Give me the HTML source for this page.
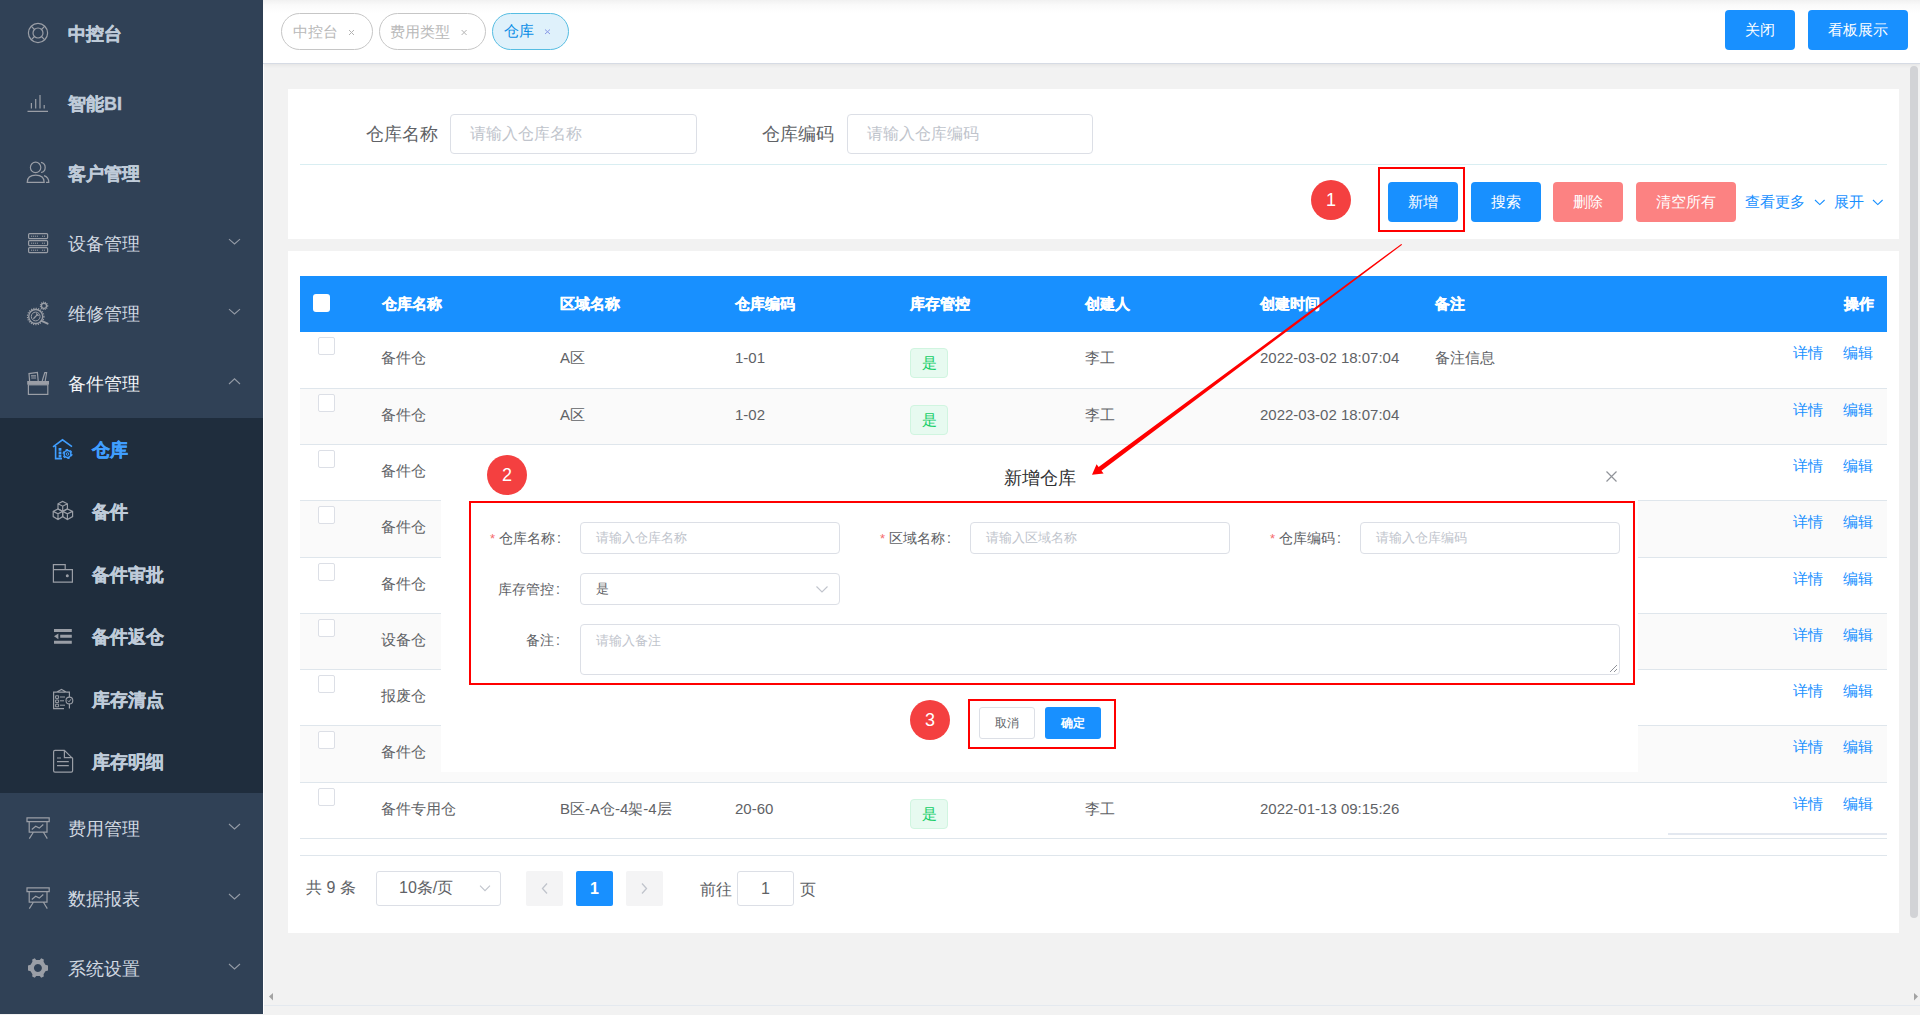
<!DOCTYPE html>
<html><head><meta charset="utf-8">
<style>
*{box-sizing:border-box;margin:0;padding:0}
html,body{width:1920px;height:1015px;overflow:hidden;background:#f2f2f2;font-family:"Liberation Sans",sans-serif;color:#606266;position:relative}
div,span{position:absolute;white-space:nowrap}
#side{left:0;top:0;width:263px;height:1014px;background:#304156}
#sub{left:0;top:418px;width:263px;height:375px;background:#1f2d3d}
.mt{left:68px;font-size:18px;color:#d2d9e2;line-height:20px}
.mb{font-weight:bold;color:#bfcbd9;-webkit-text-stroke:0.35px #bfcbd9}
.st{left:92px;font-size:18px;color:#bfcbd9;font-weight:bold;line-height:20px;-webkit-text-stroke:0.35px currentColor}
#hdr{left:263px;top:0;width:1657px;height:63px;background:linear-gradient(#f1f1f1,#fafafa 5px,#fff 13px);box-shadow:0 1px 0 #d6dbe4,0 2px 4px rgba(0,0,0,.07)}
.tag{top:13px;height:37px;border:1px solid #c6c6c6;border-radius:19px;font-size:15px;color:#b9b9b9;line-height:35px;background:#fff}
.tag span{top:0}
.btn{color:#fff;text-align:center;border-radius:4px;font-size:15px;background:#1890ff}
.card{background:#fff}
.lbl{font-size:18px;color:#606266;line-height:20px}
.inp{border:1px solid #dcdfe6;border-radius:4px;background:#fff;font-size:16px;color:#c0c4cc;line-height:20px}
.th{top:294px;color:#fff;font-size:15px;font-weight:bold;line-height:20px;-webkit-text-stroke:0.3px #fff}
.row{left:300px;width:1587px;border-bottom:1px solid #dfe6ec;background:#fff}
.row.s{background:#fafafa}
.c{font-size:15px;color:#606266;line-height:20px;top:16px}
.cb{left:18px;top:5px;width:17px;height:18px;border:1px solid #dcdfe6;border-radius:2px;background:#fff}
.yes{left:610px;top:16px;width:38px;height:30px;border:1px solid #d0f5e0;background:#e7faf0;color:#13ce66;border-radius:4px;font-size:15px;text-align:center;line-height:28px}
.lk{top:11px;font-size:15px;color:#1890ff;line-height:20px}
.rb{border:2px solid #ff0000}
.num{border-radius:50%;background:#f44040;color:#fff;font-size:18px;text-align:center}
.fl{font-size:14px;color:#606266;line-height:20px}
.fl b{color:#f56c6c;font-weight:normal;font-size:13px}
.fi{border:1px solid #dcdfe6;border-radius:4px;background:#fff;font-size:13px;color:#c0c4cc;line-height:20px}
</style></head><body>

<!-- SIDEBAR -->
<div id="side">
  <div id="sub"></div>
  <div class="mt mb" style="top:24px">中控台</div>
  <div class="mt mb" style="top:94px">智能BI</div>
  <div class="mt mb" style="top:164px">客户管理</div>
  <div class="mt" style="top:234px">设备管理</div>
  <div class="mt" style="top:304px">维修管理</div>
  <div class="mt" style="top:374px;color:#f4f6f9">备件管理</div>
  <div class="st" style="top:440px;color:#409eff">仓库</div>
  <div class="st" style="top:502px">备件</div>
  <div class="st" style="top:565px">备件审批</div>
  <div class="st" style="top:627px">备件返仓</div>
  <div class="st" style="top:690px">库存清点</div>
  <div class="st" style="top:752px">库存明细</div>
  <div class="mt" style="top:819px">费用管理</div>
  <div class="mt" style="top:889px">数据报表</div>
  <div class="mt" style="top:959px">系统设置</div>
  <svg style="position:absolute;left:0;top:0" width="263" height="1014" fill="none" stroke="#9a9ea6" stroke-width="1.2">
    <!-- 中控台 lifebuoy -->
    <circle cx="38" cy="33" r="9.6"/><circle cx="38" cy="33" r="5"/>
    <path d="M34.5 29.5L31.2 26.2M41.5 29.5L44.8 26.2M34.5 36.5L31.2 39.8M41.5 36.5L44.8 39.8"/>
    <!-- 智能BI bars -->
    <path d="M31.4 103V108.6M35.7 99V108.6M40 95V108.6M44.2 105V108.6M27.5 111.4H48"/>
    <!-- 客户管理 users -->
    <circle cx="35.6" cy="167.4" r="5.2"/>
    <path d="M41 162.3A5.2 5.2 0 0 1 41 172.5"/>
    <path d="M27.2 182.4C27.2 177.2 30.6 175.2 35.8 175.2C41 175.2 44.2 177.2 44.2 182.4Z"/>
    <path d="M44 175.6C47 176.6 48.8 179 48.8 182.4H46"/>
    <!-- 设备管理 servers -->
    <rect x="28.6" y="233.6" width="19" height="5" rx="1"/>
    <rect x="28.6" y="240.6" width="19" height="5" rx="1"/>
    <rect x="28.6" y="247.6" width="19" height="5" rx="1"/>
    <path d="M31 236.2H38M42 236.2H45M31 243.2H38M42 243.2H45M31 250.2H38M42 250.2H45" stroke-dasharray="1.2 0.8" stroke-width="1"/>
    <!-- 维修管理 gear+wrench -->
    <circle cx="35.7" cy="316.5" r="7" stroke-width="1.4"/>
    <circle cx="35.7" cy="316.5" r="8.2" stroke-dasharray="1.1 1.3" stroke-width="1.3"/>
    <circle cx="35.7" cy="316.5" r="4.4" stroke-width="1"/>
    <path d="M33.4 318.8L37.6 314.4M36.2 313.6L38.6 315.8" stroke-width="1.3"/>
    <circle cx="44" cy="305.8" r="2.6" stroke-width="1.4"/>
    <circle cx="44" cy="305.8" r="3.7" stroke-dasharray="1 1" stroke-width="1.1"/>
    <path d="M41.6 320.8L47.6 323.6" stroke-width="2" stroke-linecap="round"/>
    <!-- 备件管理 toolbox -->
    <rect x="28.4" y="384.8" width="19.4" height="9.6"/>
    <rect x="27.2" y="381" width="21.8" height="3.6" fill="#9a9ea6" stroke="none"/>
    <path d="M29.6 381L29 373.6L37.4 372.4L38.2 381M31 375.8H36M31.2 378H36M42.2 381L44.8 372.6H46.6L45.2 381"/>
    <!-- submenu: 仓库 house+gear (blue) -->
    <g stroke="#409eff" stroke-width="1.6">
      <path d="M53 446.8L62.5 439.8L72 446.6M55.6 446V458.6H62"/>
      <path d="M58.6 448.1h2.8v2.6h-2.8zM58.6 451.4h2.8v2.6h-2.8zM58.6 454.6h2.8v2.8h-2.8z" fill="#409eff" stroke="none"/>
      <circle cx="67.5" cy="454" r="3.4" stroke-width="1.5"/><circle cx="67.5" cy="454" r="4.4" stroke-width="1.3" stroke-dasharray="2.3 2.3"/>
      <circle cx="67.5" cy="454" r="1.3" stroke-width="1"/>
    </g>
    <!-- 备件 cubes -->
    <path d="M62.7 501.4L58 503.8V509L62.7 511.4L67.4 509V503.8ZM58 503.8L62.7 506.2L67.4 503.8M62.7 506.2V511.4"/>
    <path d="M62.7 511.4L58 509L53.2 511.4V516.6L58 519.6L62.7 516.6ZM53.2 511.4L58 513.8L62.7 511.4M58 513.8V519.6"/>
    <path d="M62.7 511.4L67.4 509L72.6 511.4V516.6L67.4 519.6L62.7 516.6ZM62.7 511.4L67.4 513.8L72.6 511.4M67.4 513.8V519.6"/>
    <!-- 备件审批 wallet -->
    <path d="M53.4 582.2V564.6H65.2V569.6H72.4V582.2ZM53.4 569.6H65.2"/>
    <circle cx="67.3" cy="575.7" r="0.9" fill="#9a9ea6"/>
    <!-- 备件返仓 -->
    <path d="M54 630.4H71.8M60.2 636.3H71.8M54 642.2H71.8" stroke-width="3"/>
    <path d="M54 636.3L58.4 633.4V639.2Z" fill="#9a9ea6" stroke="none"/>
    <!-- 库存清点 clipboard -->
    <path d="M64 708.6H53.6V692.2H56.4L61.5 689.4L66.6 692.2H69.4V697M69.4 704V708.6M57.4 692.2H65.6"/>
    <path d="M55.6 695.8H58.6V698.4H55.6ZM55.6 700H58.6V702.6H55.6ZM55.6 704.2H58.6V706.8H55.6ZM60 697H65M60 700.8H64M60 705.2H65" stroke-width="1"/>
    <circle cx="69.4" cy="700.5" r="3.4" stroke-width="1.1"/>
    <path d="M67.8 700.6L69 701.8L71 699.2" stroke-width="1"/>
    <!-- 库存明细 doc -->
    <path d="M64.4 750.3H55A1.4 1.4 0 0 0 53.6 751.7V770.8A1.4 1.4 0 0 0 55 772.2H71.2A1.4 1.4 0 0 0 72.6 770.8V758.4ZM64.4 750.3V757.7H72.6"/>
    <path d="M57 758H61M57 761.7H68.8M57 765.6H68.8"/>
    <!-- 费用管理 board -->
    <path d="M27 817.8H49.2V821.6H27ZM29.2 821.6V832.2H47V821.6M33.4 832.2L29.3 838.6M43.4 832.2L47.3 838.6M31.8 829.5L35.7 826.3L39.3 828.1L43.3 824.5"/>
    <path d="M27 887.8H49.2V891.6H27ZM29.2 891.6V902.2H47V891.6M33.4 902.2L29.3 908.6M43.4 902.2L47.3 908.6M31.8 899.5L35.7 896.3L39.3 898.1L43.3 894.5"/>
    <!-- 系统设置 gear filled -->
    <path fill="#9a9ea6" stroke="none" fill-rule="evenodd" d="M34.8 958.2L36.2 960H39.8L41.2 958.2L43.8 959.6L43.6 961.8L45.4 964.8L48 965.6V970.4L45.4 971.2L43.6 974.2L43.8 976.4L41.2 977.8L39.8 976H36.2L34.8 977.8L32.2 976.4L32.4 974.2L30.6 971.2L28 970.4V965.6L30.6 964.8L32.4 961.8L32.2 959.6ZM37.9 963.9A4 4 0 1 0 37.91 963.9Z"/>
    <!-- arrows -->
    <g stroke="#939aa5" stroke-width="1.1">
      <path d="M229 239.2L234.5 244L240 239.2M229 309.2L234.5 314L240 309.2M229 384L234.5 378.8L240 384M229 824L234.5 829L240 824M229 894L234.5 899L240 894M229 964L234.5 969L240 964"/>
    </g>
  </svg>
</div>
<div style="left:263px;top:0;width:1px;height:1014px;background:#fff"></div>

<!-- HEADER -->
<div id="hdr">
  <div class="tag" style="left:18px;width:92px"><span style="left:11px">中控台</span></div>
  <div class="tag" style="left:116px;width:107px"><span style="left:10px">费用类型</span></div>
  <div class="tag" style="left:229px;width:77px;background:#dff1fb;border-color:#56bde2;color:#0a8de6"><span style="left:11px;top:-1px">仓库</span></div>
  <svg style="position:absolute;left:0;top:0" width="400" height="63" fill="none" stroke-width="1">
    <path d="M86 30L91 35M91 30L86 35M198.6 30L203.6 35M203.6 30L198.6 35" stroke="#b3b3b3"/>
    <path d="M282 29.5L287 34M287 29.5L282 34" stroke="#8a9be8"/>
  </svg>
  <div class="btn" style="left:1462px;top:10px;width:70px;height:40px;line-height:40px">关闭</div>
  <div class="btn" style="left:1545px;top:10px;width:100px;height:40px;line-height:40px">看板展示</div>
</div>

<!-- SEARCH CARD -->
<div class="card" style="left:288px;top:89px;width:1611px;height:150px">
  <div class="lbl" style="left:78px;top:35px">仓库名称</div>
  <div class="inp" style="left:162px;top:25px;width:247px;height:40px"><span style="left:19px;top:9px">请输入仓库名称</span></div>
  <div class="lbl" style="left:474px;top:35px">仓库编码</div>
  <div class="inp" style="left:559px;top:25px;width:246px;height:40px"><span style="left:19px;top:9px">请输入仓库编码</span></div>
  <div style="left:12px;top:75px;width:1587px;height:1px;background:#d9eef2"></div>
  <div class="btn" style="left:1100px;top:93px;width:70px;height:40px;line-height:40px">新增</div>
  <div class="btn" style="left:1183px;top:93px;width:70px;height:40px;line-height:40px">搜索</div>
  <div class="btn" style="left:1265px;top:93px;width:70px;height:40px;line-height:40px;background:#fc8282">删除</div>
  <div class="btn" style="left:1348px;top:93px;width:100px;height:40px;line-height:40px;background:#fc8282">清空所有</div>
  <div style="left:1457px;top:103px;font-size:15px;color:#1890ff;line-height:20px">查看更多</div>
  <div style="left:1546px;top:103px;font-size:15px;color:#1890ff;line-height:20px">展开</div>
  <svg style="position:absolute;left:0;top:0" width="1611" height="150" fill="none" stroke="#1890ff" stroke-width="1.1">
    <path d="M1527 111L1531.8 115.6L1536.6 111M1585 111L1589.8 115.6L1594.6 111"/>
  </svg>
</div>

<!-- TABLE CARD -->
<div class="card" style="left:288px;top:251px;width:1611px;height:682px"></div>
<div style="left:300px;top:276px;width:1587px;height:56px;background:#1890ff"></div>
<div style="left:313px;top:294px;width:17px;height:18px;background:#fff;border-radius:3px"></div>
<div class="th" style="left:382px">仓库名称</div>
<div class="th" style="left:560px">区域名称</div>
<div class="th" style="left:735px">仓库编码</div>
<div class="th" style="left:910px">库存管控</div>
<div class="th" style="left:1085px">创建人</div>
<div class="th" style="left:1260px">创建时间</div>
<div class="th" style="left:1435px">备注</div>
<div class="th" style="left:1844px">操作</div>

<div id="rows"></div>
<div class="row" style="top:332px;height:57px"><div class="cb"></div><div class="c" style="left:81px">备件仓</div><div class="c" style="left:260px">A区</div><div class="c" style="left:435px">1-01</div><div class="yes">是</div><div class="c" style="left:785px">李工</div><div class="c" style="left:960px">2022-03-02 18:07:04</div><div class="c" style="left:1135px">备注信息</div><div class="lk" style="left:1493px">详情</div><div class="lk" style="left:1543px">编辑</div></div>
<div class="row s" style="top:389px;height:56px"><div class="cb"></div><div class="c" style="left:81px">备件仓</div><div class="c" style="left:260px">A区</div><div class="c" style="left:435px">1-02</div><div class="yes">是</div><div class="c" style="left:785px">李工</div><div class="c" style="left:960px">2022-03-02 18:07:04</div><div class="lk" style="left:1493px">详情</div><div class="lk" style="left:1543px">编辑</div></div>
<div class="row" style="top:445px;height:56px"><div class="cb"></div><div class="c" style="left:81px">备件仓</div><div class="lk" style="left:1493px">详情</div><div class="lk" style="left:1543px">编辑</div></div>
<div class="row s" style="top:501px;height:57px"><div class="cb"></div><div class="c" style="left:81px">备件仓</div><div class="lk" style="left:1493px">详情</div><div class="lk" style="left:1543px">编辑</div></div>
<div class="row" style="top:558px;height:56px"><div class="cb"></div><div class="c" style="left:81px">备件仓</div><div class="lk" style="left:1493px">详情</div><div class="lk" style="left:1543px">编辑</div></div>
<div class="row s" style="top:614px;height:56px"><div class="cb"></div><div class="c" style="left:81px">设备仓</div><div class="lk" style="left:1493px">详情</div><div class="lk" style="left:1543px">编辑</div></div>
<div class="row" style="top:670px;height:56px"><div class="cb"></div><div class="c" style="left:81px">报废仓</div><div class="lk" style="left:1493px">详情</div><div class="lk" style="left:1543px">编辑</div></div>
<div class="row s" style="top:726px;height:57px"><div class="cb"></div><div class="c" style="left:81px">备件仓</div><div class="lk" style="left:1493px">详情</div><div class="lk" style="left:1543px">编辑</div></div>
<div class="row" style="top:783px;height:56px"><div class="cb"></div><div class="c" style="left:81px">备件专用仓</div><div class="c" style="left:260px">B区-A仓-4架-4层</div><div class="c" style="left:435px">20-60</div><div class="yes">是</div><div class="c" style="left:785px">李工</div><div class="c" style="left:960px">2022-01-13 09:15:26</div><div class="lk" style="left:1493px">详情</div><div class="lk" style="left:1543px">编辑</div></div>
<div style="left:1668px;top:833px;width:219px;height:2px;background:#e3e8f0"></div>
<div style="left:300px;top:855px;width:1587px;height:1px;background:#dfe6ec"></div>

<!-- PAGINATION -->
<div style="left:306px;top:878px;font-size:16px;color:#606266;line-height:20px">共 9 条</div>
<div style="left:376px;top:871px;width:125px;height:35px;border:1px solid #dcdfe6;border-radius:3px;background:#fff"></div>
<div style="left:399px;top:878px;font-size:16px;color:#606266;line-height:20px">10条/页</div>
<div style="left:526px;top:871px;width:37px;height:35px;background:#f4f4f5;border-radius:2px"></div>
<div style="left:576px;top:871px;width:37px;height:35px;background:#1890ff;border-radius:2px;color:#fff;font-weight:bold;font-size:16px;text-align:center;line-height:35px">1</div>
<div style="left:626px;top:871px;width:37px;height:35px;background:#f4f4f5;border-radius:2px"></div>
<div style="left:700px;top:880px;font-size:16px;color:#606266;line-height:20px">前往</div>
<div style="left:737px;top:871px;width:57px;height:35px;border:1px solid #dcdfe6;border-radius:3px;background:#fff;text-align:center;font-size:16px;line-height:33px;color:#606266">1</div>
<div style="left:800px;top:880px;font-size:16px;color:#606266;line-height:20px">页</div>
<svg style="position:absolute;left:0;top:0" width="1920" height="1015" fill="none">
  <path d="M480 885.6L485 890.6L490 885.6" stroke="#c0c4cc" stroke-width="1.1"/>
  <path d="M547 883.5L542.5 888.5L547 893.5" stroke="#c0c4cc" stroke-width="1.3"/>
  <path d="M642 883.5L646.5 888.5L642 893.5" stroke="#c0c4cc" stroke-width="1.3"/>
</svg>

<!-- DIALOG -->
<div style="left:441px;top:445px;width:1197px;height:327px;background:#fff"></div>
<div style="left:1004px;top:468px;font-size:18px;color:#303133;line-height:20px">新增仓库</div>
<svg style="position:absolute;left:1605px;top:470px" width="13" height="13"><path d="M1.5 1.5L11.5 11.5M11.5 1.5L1.5 11.5" stroke="#909399" stroke-width="1.2"/></svg>

<div class="fl" style="left:490px;top:528px"><b>*</b> 仓库名称<i style="font-style:normal;margin-left:2px">:</i></div>
<div class="fi" style="left:580px;top:522px;width:260px;height:32px"><span style="left:15px;top:5px">请输入仓库名称</span></div>
<div class="fl" style="left:880px;top:528px"><b>*</b> 区域名称<i style="font-style:normal;margin-left:2px">:</i></div>
<div class="fi" style="left:970px;top:522px;width:260px;height:32px"><span style="left:15px;top:5px">请输入区域名称</span></div>
<div class="fl" style="left:1270px;top:528px"><b>*</b> 仓库编码<i style="font-style:normal;margin-left:2px">:</i></div>
<div class="fi" style="left:1360px;top:522px;width:260px;height:32px"><span style="left:15px;top:5px">请输入仓库编码</span></div>
<div class="fl" style="left:498px;top:579px">库存管控<i style="font-style:normal;margin-left:2px">:</i></div>
<div class="fi" style="left:580px;top:573px;width:260px;height:32px;color:#606266"><span style="left:15px;top:5px">是</span></div>
<svg style="position:absolute;left:815px;top:585px" width="14" height="9"><path d="M1.5 1.5L7 7L12.5 1.5" stroke="#c0c4cc" stroke-width="1.1" fill="none"/></svg>
<div class="fl" style="left:526px;top:630px">备注<i style="font-style:normal;margin-left:2px">:</i></div>
<div class="fi" style="left:580px;top:624px;width:1040px;height:51px"><span style="left:15px;top:6px">请输入备注</span></div>
<svg style="position:absolute;left:1608px;top:663px" width="10" height="10"><path d="M9 2L2 9M9 6L6 9" stroke="#909399" stroke-width="1"/></svg>

<div style="left:979px;top:707px;width:56px;height:32px;border:1px solid #dcdfe6;border-radius:3px;background:#fff;font-size:12px;color:#606266;text-align:center;line-height:30px">取消</div>
<div style="left:1045px;top:707px;width:56px;height:32px;border-radius:3px;background:#1890ff;font-size:12px;color:#fff;text-align:center;line-height:32px;font-weight:bold">确定</div>

<!-- ANNOTATIONS -->
<div class="rb" style="left:1378px;top:167px;width:87px;height:65px"></div>
<div class="rb" style="left:469px;top:501px;width:1166px;height:184px"></div>
<div class="rb" style="left:968px;top:699px;width:148px;height:50px"></div>
<div class="num" style="left:1311px;top:180px;width:40px;height:40px;line-height:40px">1</div>
<div class="num" style="left:487px;top:455px;width:40px;height:40px;line-height:40px">2</div>
<div class="num" style="left:910px;top:699.5px;width:40px;height:40px;line-height:40px">3</div>
<svg style="position:absolute;left:0;top:0" width="1920" height="1015">
  <polygon fill="#ff0000" points="1401.3,243.9 1402.1,244.8 1101.4,470.7 1103.6,473.4 1092,474.8 1096.6,464.2 1098.6,466.9"/>
</svg>

<!-- SCROLLBARS -->
<div style="left:1910px;top:66px;width:8px;height:852px;background:#d2d3d6;border-radius:4px"></div>
<div style="left:264px;top:1005px;width:1656px;height:1px;background:#e4e9ef"></div>
<svg style="position:absolute;left:0;top:0" width="1920" height="1015">
  <path d="M269 996.6L273 993V1000.4Z" fill="#a3a3a3"/>
  <path d="M1918 996.6L1914 993V1000.4Z" fill="#a3a3a3"/>
</svg>
</body></html>
